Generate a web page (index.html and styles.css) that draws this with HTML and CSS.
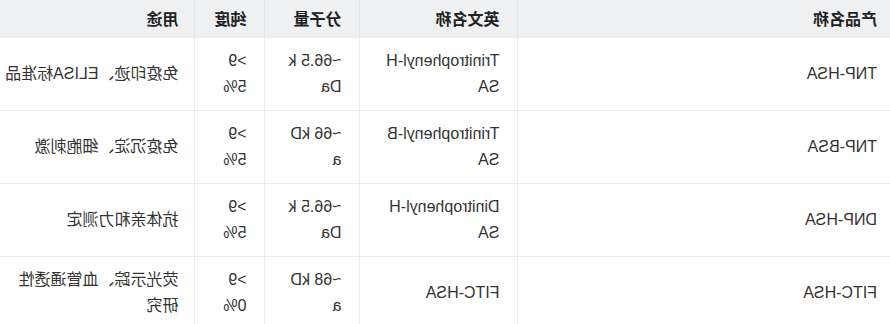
FILE: index.html
```html
<!DOCTYPE html>
<html lang="zh">
<head>
<meta charset="utf-8">
<link rel="stylesheet" href="styles.css">
</head>
<body>
<div class="mirror">
<table class="spec">
<colgroup>
<col class="c-name"><col class="c-en"><col class="c-mw"><col class="c-pur"><col class="c-use">
</colgroup>
<thead>
<tr><th>产品名称</th><th>英文名称</th><th>分子量</th><th>纯度</th><th>用途</th></tr>
</thead>
<tbody>
<tr><td>TNP-HSA</td><td>Trinitrophenyl-HSA</td><td>~66.5 kDa</td><td>&gt;95%</td><td>免疫印迹、ELISA标准品</td></tr>
<tr><td>TNP-BSA</td><td>Trinitrophenyl-BSA</td><td>~66 kDa</td><td>&gt;95%</td><td>免疫沉淀、细胞刺激</td></tr>
<tr><td>DNP-HSA</td><td>Dinitrophenyl-HSA</td><td>~66.5 kDa</td><td>&gt;95%</td><td>抗体亲和力测定</td></tr>
<tr><td>FITC-HSA</td><td>FITC-HSA</td><td>~68 kDa</td><td>&gt;90%</td><td>荧光示踪、血管通透性研究</td></tr>
</tbody>
</table>
</div>
</body>
</html>
```
FILE: styles.css
```css
html, body { margin: 0; padding: 0; background: #fff; }
.mirror { transform: scaleX(-1); width: 890px; }
.spec {
  width: 890px;
  table-layout: fixed;
  border-collapse: collapse;
  font-family: "Liberation Sans", "Noto Sans CJK SC", sans-serif;
  font-size: 16px;
  color: #333;
}
.c-name { width: 372px; }
.c-en { width: 158px; }
.c-mw { width: 95px; }
.c-pur { width: 70px; }
.c-use { width: 195px; }
.spec th {
  background: #eff0f2;
  height: 37px;
  padding: 0 18px;
  text-align: left;
  font-weight: bold;
  color: #222;
  border-left: 1px solid #e4e5e7;
  box-sizing: border-box;
}
.spec td {
  height: 72px;
  padding: 10px 18px;
  line-height: 26px;
  word-break: break-all;
  vertical-align: middle;
  border-left: 1px solid #ececec;
  border-top: 1px solid #ececec;
  box-sizing: border-box;
}
.spec th:first-child, .spec td:first-child { border-left: none; padding-left: 13px; }
.spec td:nth-child(2) { padding-right: 23px; }
.spec th:last-child, .spec td:last-child { padding-left: 16px; padding-right: 5px; }
```
